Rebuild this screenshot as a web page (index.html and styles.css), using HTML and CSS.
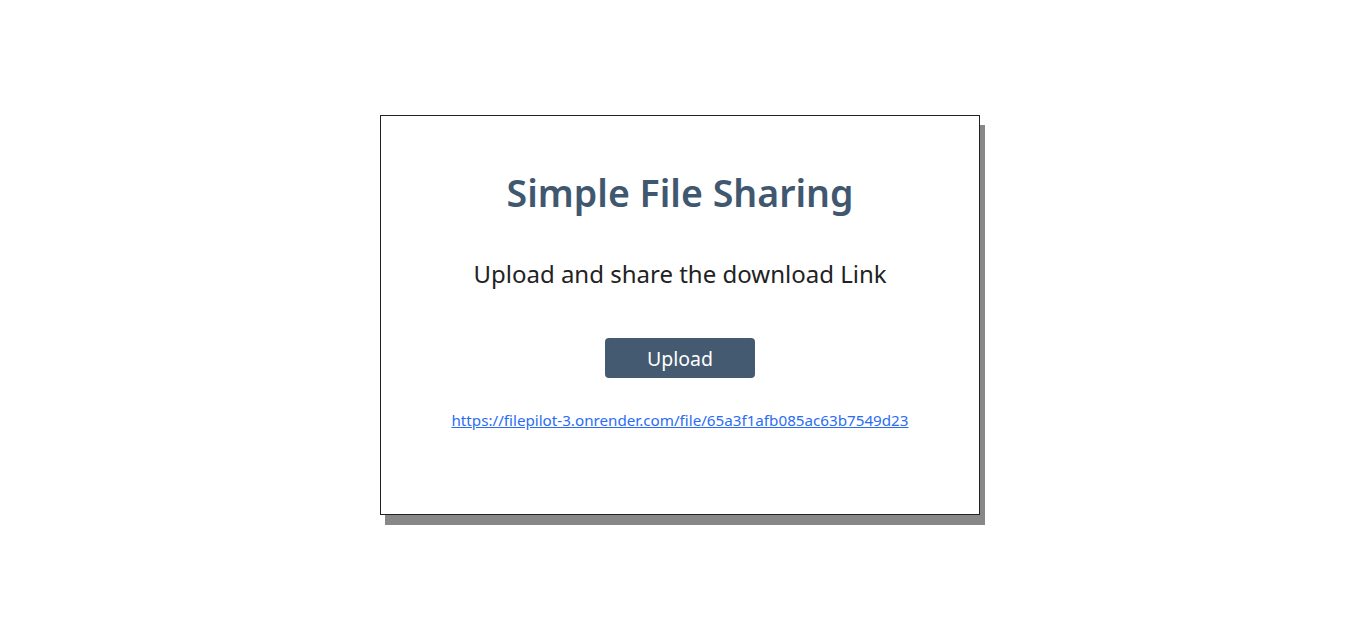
FILE: index.html
```html
<!DOCTYPE html>
<html lang="en">
<head>
<meta charset="utf-8">
<title>Simple File Sharing</title>
<link rel="stylesheet" href="styles.css">
</head>
<body>
<main class="page">
  <section class="card">
    <h1 class="title">Simple File Sharing</h1>
    <p class="subtitle">Upload and share the download Link</p>
    <button class="upload-btn" type="button">Upload</button>
    <a class="file-link" href="#">https://filepilot-3.onrender.com/file/65a3f1afb085ac63b7549d23</a>
  </section>
</main>
</body>
</html>
```
FILE: styles.css
```css
* { box-sizing: border-box; }
html, body { margin: 0; padding: 0; background: #fff; }
body { font-family: "Noto Sans", "Open Sans", sans-serif; }
.page {
  min-height: 100vh;
  display: flex;
  justify-content: center;
  align-items: flex-start;
  padding-top: 115px;
  padding-right: 3px;
}
.card {
  width: 600px;
  height: 400px;
  border: 1px solid #222;
  background: #fff;
  box-shadow: 5px 10px 0 #888;
  display: flex;
  flex-direction: column;
  align-items: center;
  padding-top: 51px;
}
.title {
  margin: 0;
  font-size: 37.5px;
  font-weight: 600;
  color: #3f5870;
  line-height: 52px;
}
.subtitle {
  margin: 38px 0 0;
  font-size: 24px;
  font-weight: 400;
  color: #222;
  line-height: 34px;
}
.upload-btn {
  margin-top: 47px;
  width: 150px;
  height: 40px;
  border: none;
  border-radius: 4px;
  background: #435a70;
  color: #fff;
  font-family: inherit;
  font-size: 19.5px;
  cursor: pointer;
}
.file-link {
  margin-top: 31px;
  font-size: 15.2px;
  color: #2a6df4;
  line-height: 22px;
}
```
